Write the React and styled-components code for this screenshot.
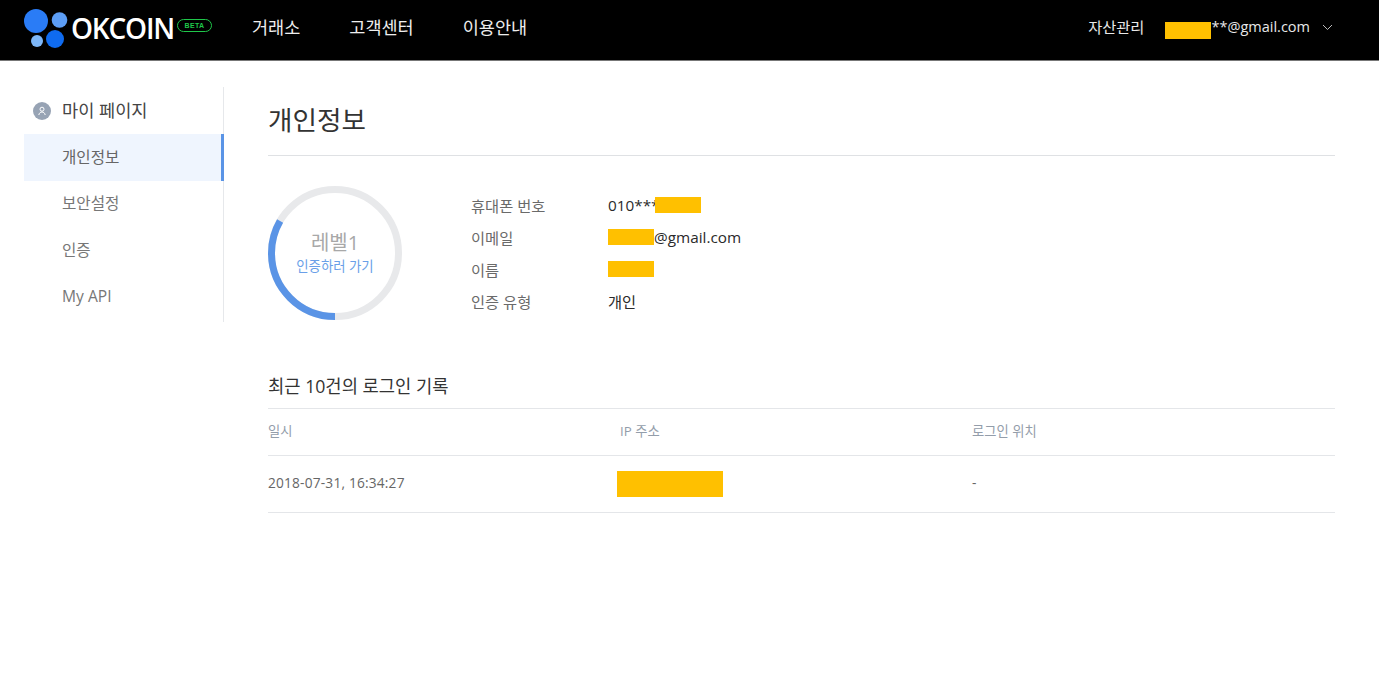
import React from "react";
import styled, { createGlobalStyle } from "styled-components";

const Global = createGlobalStyle`
  html, body { margin: 0; padding: 0; background: #fff; }
  body { font-family: "Open Sans", "Noto Sans CJK KR", sans-serif; overflow: hidden; }
  * { box-sizing: border-box; }
`;

const Page = styled.div`
  width: 1379px;
  height: 680px;
  background: #fff;
`;

const Header = styled.header`
  height: 61px;
  background: #000;
  border-bottom: 1px solid #777;
  display: flex;
  align-items: center;
  padding: 0 46px 7px 24px;
  color: #fff;
`;

const Logo = styled.div`
  display: flex;
  align-items: center;
  width: 228px;
  margin-top: 5px;
`;

const LogoText = styled.span`
  font-family: "Open Sans", sans-serif;
  font-size: 28px;
  font-weight: 600;
  letter-spacing: -1.2px;
  line-height: 30px;
  margin-left: 3px;
  margin-top: -2px;
`;

const BetaBadge = styled.span`
  width: 35px;
  height: 13px;
  border: 1.5px solid #1fc74a;
  border-radius: 7px;
  color: #1fc74a;
  font-family: "Liberation Sans", sans-serif;
  font-size: 7px;
  font-weight: 700;
  letter-spacing: 0.3px;
  display: flex;
  align-items: center;
  justify-content: center;
  margin: -7px 0 0 3px;
`;

const Nav = styled.nav`
  display: flex;
  gap: 49px;
  flex: 1;
`;

const NavItem = styled.a`
  font-size: 17.5px;
  line-height: 24px;
  color: #eee;
`;

const AssetLink = styled.a`
  font-size: 15.3px;
  color: #e8e8e8;
  margin: -2px 21px 0 0;
`;

const Account = styled.div`
  display: flex;
  align-items: center;
  font-size: 14.5px;
  color: #e8e8e8;
`;

const HeaderRedact = styled.span`
  width: 46px;
  height: 17px;
  background: #ffc000;
  margin-top: 8px;
`;

const Chevron = styled.svg`
  width: 11px;
  height: 7px;
  margin-left: 12px;
  margin-top: 2px;
`;

const Body = styled.div`
  display: flex;
  padding: 26px 44px 0 24px;
`;

const Sidebar = styled.aside`
  width: 200px;
  height: 235px;
  border-right: 1px solid #e6e8eb;
  flex-shrink: 0;
`;

const SideTitle = styled.div`
  height: 47px;
  display: flex;
  align-items: center;
  gap: 11px;
  padding: 0 0 2px 9px;
  font-size: 17.6px;
  color: #444;
`;

const TitleIcon = styled.span`
  width: 18px;
  height: 18px;
  border-radius: 50%;
  background: #97a3b4;
  display: flex;
  align-items: center;
  justify-content: center;
  margin-top: 2px;
`;

const SideItem = styled.div`
  height: 46.5px;
  display: flex;
  align-items: center;
  padding: 0 0 2px 38px;
  font-size: 15.6px;
  color: ${(p) => (p.$active ? "#666" : "#777")};
  background: ${(p) => (p.$active ? "#eff5fe" : "transparent")};
  border-right: ${(p) => (p.$active ? "3px solid #5a94e6" : "none")};
  margin-right: ${(p) => (p.$active ? "-1px" : "0")};
`;

const Main = styled.main`
  flex: 1;
  margin-left: 44px;
`;

const PageTitle = styled.h1`
  margin: 0 0 30px;
  height: 69px;
  padding: 16px 0 18px;
  border-bottom: 1px solid #dfe1e4;
  font-size: 26.6px;
  font-weight: 400;
  line-height: 34px;
  color: #333;
`;

const Profile = styled.section`
  display: flex;
  height: 134px;
`;

const Ring = styled.div`
  width: 134px;
  height: 134px;
  display: grid;
  flex-shrink: 0;
  margin-right: 69px;
  & > * { grid-area: 1 / 1; }
`;

const RingSvg = styled.svg`
  width: 134px;
  height: 134px;
`;

const RingLabel = styled.div`
  display: flex;
  flex-direction: column;
  align-items: center;
  justify-content: center;
`;

const Level = styled.div`
  font-size: 20px;
  line-height: 26px;
  color: #a8a8a8;
`;

const GoVerify = styled.a`
  font-size: 13.4px;
  line-height: 20px;
  color: #6a9fe8;
`;

const InfoList = styled.dl`
  margin: 3px 0 0;
  display: grid;
  grid-template-columns: 137px auto;
  grid-auto-rows: 32px;
  align-items: center;
  justify-content: start;
`;

const InfoLabel = styled.dt`
  font-size: 15.3px;
  color: #6a6a6a;
`;

const InfoValue = styled.dd`
  margin: 0;
  display: flex;
  align-items: center;
  font-size: 15.3px;
  color: #2a2a2a;
  height: 20px;
`;

const Redact = styled.span`
  display: inline-block;
  width: ${(p) => p.$w}px;
  height: ${(p) => p.$h}px;
  background: #ffc000;
  margin-left: ${(p) => p.$ml || 0}px;
`;

const SectionTitle = styled.h2`
  margin: 54px 0 0;
  font-size: 17.7px;
  font-weight: 400;
  line-height: 24px;
  height: 34px;
  color: #333;
`;

const Table = styled.div`
  border-top: 1px solid #e4e6e9;
`;

const TableRow = styled.div`
  display: grid;
  grid-template-columns: 352px 352px 1fr;
  align-items: center;
  height: ${(p) => p.$h}px;
  border-bottom: 1px solid #e4e6e9;
`;

const HeadCell = styled.div`
  font-size: 13.3px;
  color: #939daa;
  padding-bottom: 3px;
`;

const Cell = styled.div`
  font-size: 13.7px;
  color: #666;
  letter-spacing: 0.2px;
  display: flex;
  align-items: center;
  padding-bottom: ${(p) => p.$pb ?? 4}px;
`;

export default function App() {
  return (
    <Page>
      <Global />
      <Header>
        <Logo>
          <svg width="44" height="42" viewBox="0 0 44 42" aria-hidden="true">
            <circle cx="12" cy="13" r="12" fill="#2a7cf6" />
            <circle cx="35.500" cy="12" r="7.800" fill="#5c9df5" />
            <circle cx="13" cy="33" r="6" fill="#7db7f8" />
            <circle cx="31" cy="31" r="9" fill="#0f6bf0" />
          </svg>
          <LogoText>OKCOIN</LogoText>
          <BetaBadge>BETA</BetaBadge>
        </Logo>
        <Nav>
          <NavItem>거래소</NavItem>
          <NavItem>고객센터</NavItem>
          <NavItem>이용안내</NavItem>
        </Nav>
        <AssetLink>자산관리</AssetLink>
        <Account>
          <HeaderRedact />
          <span>**@gmail.com</span>
          <Chevron viewBox="0 0 11 7" aria-hidden="true">
            <path d="M1 1l4.500 4.500L10 1" fill="none" stroke="#bbb" strokeWidth="1" />
          </Chevron>
        </Account>
      </Header>
      <Body>
        <Sidebar>
          <SideTitle>
            <TitleIcon>
              <svg width="10" height="10" viewBox="0 0 10 10" aria-hidden="true">
                <circle cx="5" cy="3.200" r="2" fill="none" stroke="#fff" strokeWidth="1" />
                <path d="M1.800 9c.4-2 1.600-3 3.200-3s2.800 1 3.200 3" fill="none" stroke="#fff" strokeWidth="1" />
              </svg>
            </TitleIcon>
            마이 페이지
          </SideTitle>
          <SideItem $active>개인정보</SideItem>
          <SideItem>보안설정</SideItem>
          <SideItem>인증</SideItem>
          <SideItem>My API</SideItem>
        </Sidebar>
        <Main>
          <PageTitle>개인정보</PageTitle>
          <Profile>
            <Ring>
              <RingSvg viewBox="0 0 134 134" aria-hidden="true">
                <circle cx="67" cy="67" r="63.500" fill="none" stroke="#e8e9eb" strokeWidth="7" />
                <circle
                  cx="67"
                  cy="67"
                  r="63.500"
                  fill="none"
                  stroke="#5a94e6"
                  strokeWidth="7"
                  strokeDasharray="133 400"
                  transform="rotate(90 67 67)"
                />
              </RingSvg>
              <RingLabel>
                <Level>레벨1</Level>
                <GoVerify>인증하러 가기</GoVerify>
              </RingLabel>
            </Ring>
            <InfoList>
              <InfoLabel>휴대폰 번호</InfoLabel>
              <InfoValue>
                010***
                <Redact $w={46} $h={16} $ml={-5} />
              </InfoValue>
              <InfoLabel>이메일</InfoLabel>
              <InfoValue>
                <Redact $w={46} $h={16} />
                @gmail.com
              </InfoValue>
              <InfoLabel>이름</InfoLabel>
              <InfoValue>
                <Redact $w={46} $h={16} />
              </InfoValue>
              <InfoLabel>인증 유형</InfoLabel>
              <InfoValue>개인</InfoValue>
            </InfoList>
          </Profile>
          <SectionTitle>최근 10건의 로그인 기록</SectionTitle>
          <Table>
            <TableRow $h={47}>
              <HeadCell>일시</HeadCell>
              <HeadCell>IP 주소</HeadCell>
              <HeadCell>로그인 위치</HeadCell>
            </TableRow>
            <TableRow $h={57}>
              <Cell>2018-07-31, 16:34:27</Cell>
              <Cell $pb={0}>
                <Redact $w={106} $h={26} $ml={-3} />
              </Cell>
              <Cell>-</Cell>
            </TableRow>
          </Table>
        </Main>
      </Body>
    </Page>
  );
}
